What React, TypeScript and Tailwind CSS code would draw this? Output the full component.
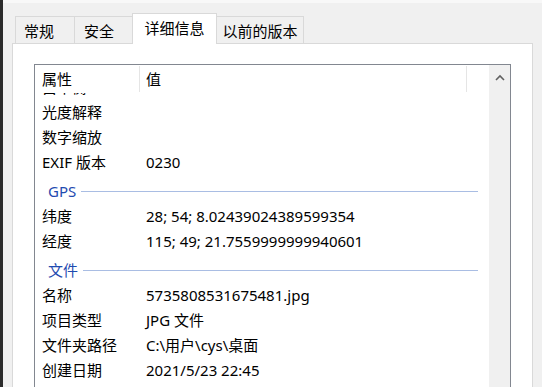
const rows1 = [
  { name: '白平衡', value: '' },
  { name: '光度解释', value: '' },
  { name: '数字缩放', value: '' },
  { name: 'EXIF 版本', value: '0230' },
];

const gps = [
  { name: '纬度', value: '28; 54; 8.02439024389599354' },
  { name: '经度', value: '115; 49; 21.7559999999940601' },
];

const file = [
  { name: '名称', value: '5735808531675481.jpg' },
  { name: '项目类型', value: 'JPG 文件' },
  { name: '文件夹路径', value: 'C:\\用户\\cys\\桌面' },
  { name: '创建日期', value: '2021/5/23 22:45' },
];

function Row({ name, value }: { name: string; value: string }) {
  return (
    <div className="grid h-[25px] grid-cols-[104px_1fr] items-center">
      <div className="whitespace-nowrap pl-[7px]">{name}</div>
      <div className="whitespace-nowrap pl-[7px]">{value}</div>
    </div>
  );
}

function Group({ label }: { label: string }) {
  return (
    <div className="flex h-[29px] items-center pl-[13px] pr-[11px] pt-[3px]">
      <span className="text-[#1f4bb0]">{label}</span>
      <div className="ml-[5px] h-px flex-1 bg-[#a9bde3]" />
    </div>
  );
}

export default function App() {
  return (
    <div
      className="flex h-[387px] w-[542px] overflow-hidden bg-[#f0f0f0] text-[15px] text-black"
      style={{ fontFamily: '"Noto Sans", "Noto Sans CJK SC", sans-serif' }}
    >
      {/* dark window edge */}
      <div className="w-[3px] shrink-0 bg-[#2b2b2b]" />

      <div className="flex flex-1 flex-col">
        <div className="h-[3px] shrink-0 bg-[#f8f8f8]" />

        <div className="flex shrink-0 flex-col px-[9px] pt-[10px]">
          {/* tabs */}
          <div className="relative z-10 flex h-[30px] shrink-0 items-end pl-[3px]">
            <div className="flex h-[27px] w-[60px] items-center border border-b-0 border-[#d9d9d9] pl-[8px] pt-[3px]">
              常规
            </div>
            <div className="-ml-px flex h-[27px] w-[59px] items-center border border-b-0 border-[#d9d9d9] pl-[9px] pt-[3px]">
              安全
            </div>
            <div className="relative z-10 -mb-px -ml-px flex h-[31px] w-[85px] items-center justify-center border border-b-0 border-[#d9d9d9] bg-white pb-[2px]">
              详细信息
            </div>
            <div className="-ml-px flex h-[27px] w-[88px] items-center justify-center border border-b-0 border-[#d9d9d9] pt-[3px]">
              以前的版本
            </div>
          </div>

          {/* panel */}
          <div className="flex shrink-0 flex-col border border-[#d9d9d9] bg-white px-[21px] pt-[20px]">
            <div className="flex h-[400px] shrink-0 border border-[#828790]">
              <div className="flex flex-1 flex-col overflow-hidden">
                {/* header */}
                <div className="relative z-10 flex h-[28px] shrink-0 items-center bg-white">
                  <div className="w-[104px] pl-[7px]">属性</div>
                  <div className="h-[26px] w-px bg-[#e5e5e5]" />
                  <div className="w-[326px] pl-[6px]">值</div>
                  <div className="h-[26px] w-px bg-[#e5e5e5]" />
                </div>

                <div className="flex-1 overflow-hidden">
                  <div className="-mt-[18px]">
                    {rows1.map(r => (
                      <Row key={r.name} {...r} />
                    ))}
                    <Group label="GPS" />
                    {gps.map(r => (
                      <Row key={r.name} {...r} />
                    ))}
                    <Group label="文件" />
                    {file.map(r => (
                      <Row key={r.name} {...r} />
                    ))}
                  </div>
                </div>
              </div>

              {/* scrollbar */}
              <div className="flex w-[21px] shrink-0 justify-center bg-[#f0f0f0] pt-[9px]">
                <svg width="10" height="7" viewBox="0 0 10 7">
                  <polyline points="1,6 5,2 9,6" fill="none" stroke="#606060" strokeWidth="1.6" />
                </svg>
              </div>
            </div>
          </div>
        </div>
      </div>
    </div>
  );
}
